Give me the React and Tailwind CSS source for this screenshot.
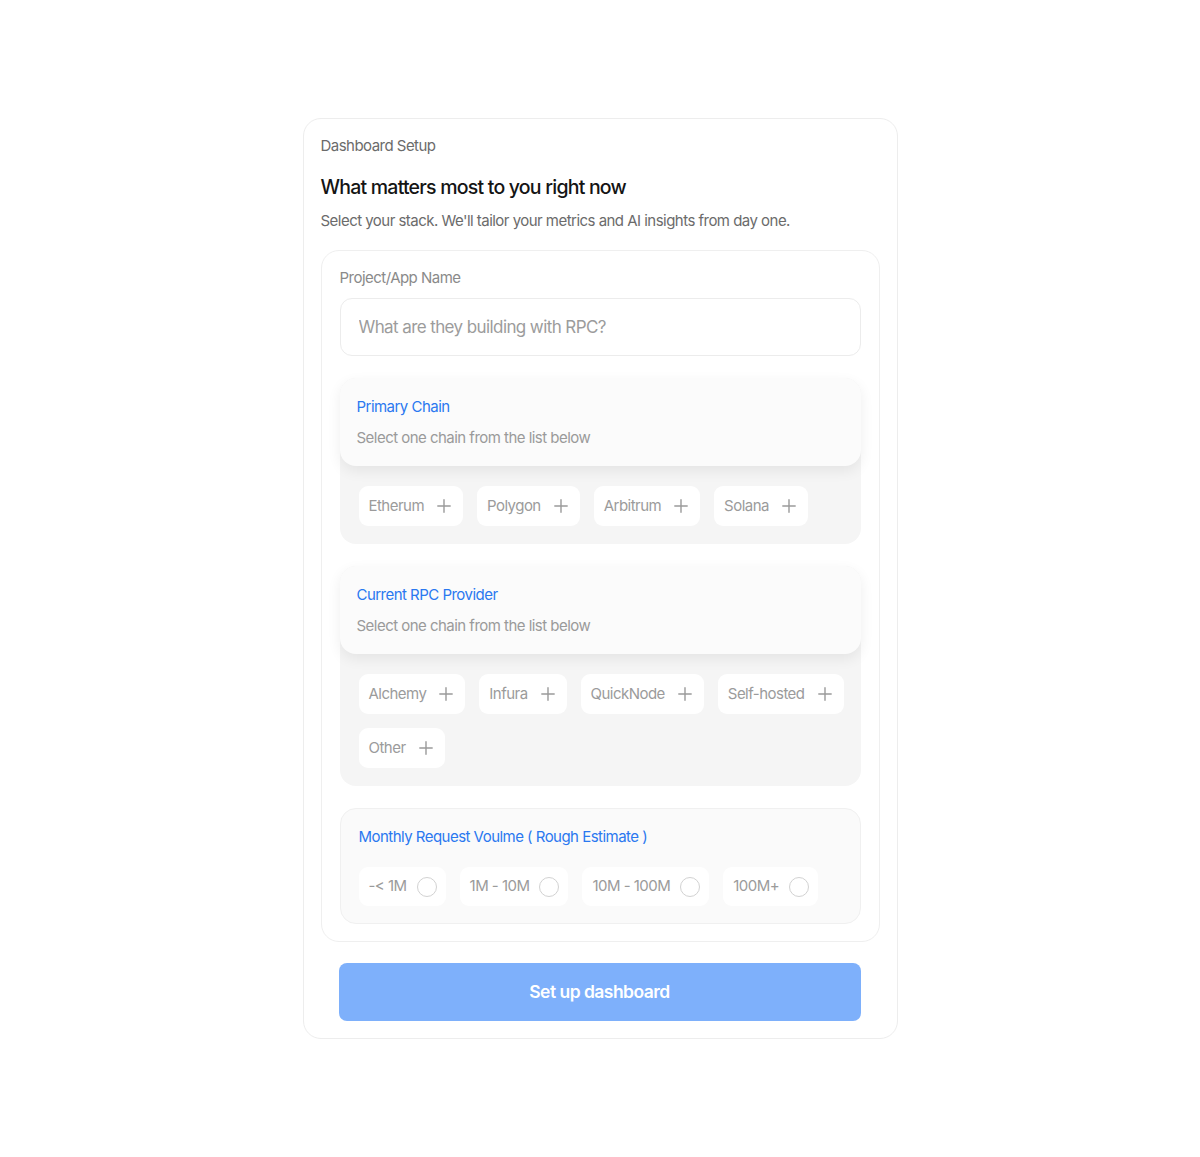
import React from 'react';

const chains = ['Etherum', 'Polygon', 'Arbitrum', 'Solana'];
const providers = ['Alchemy', 'Infura', 'QuickNode', 'Self-hosted', 'Other'];
const volumes = ['-< 1M', '1M - 10M', '10M - 100M', '100M+'];

const PlusIcon = () => (
    <svg width="14" height="14" viewBox="0 0 14 14" fill="none" stroke="#9a9a9a" strokeWidth="1.4" strokeLinecap="round">
        <path d="M7 0.8v12.4M0.8 7h12.4" />
    </svg>
);

const Chip = ({ label }) => (
    <button className="flex h-[40px] items-center gap-[13px] rounded-[9px] bg-white pl-[10px] pr-[12px] text-[15px] text-[#9b9b9b]">
        <span>{label}</span>
        <PlusIcon />
    </button>
);

const ChipPanel = ({ title, subtitle, items }) => (
    <div className="rounded-[16px] bg-[#f5f5f5] pb-[18px]">
        <div className="rounded-[16px] bg-[#fbfbfb] px-[17px] pt-[19px] pb-[18px] shadow-[0_5px_14px_rgba(0,0,0,0.07)]">
            <div className="text-[15px] leading-[20px] text-[#2a78f0]">{title}</div>
            <div className="mt-[11px] text-[15px] leading-[20px] text-[#9a9a9a]">{subtitle}</div>
        </div>
        <div className="mt-[20px] flex flex-wrap gap-x-[14px] gap-y-[14px] pl-[19px] pr-[12px]">
            {items.map((item) => (
                <Chip key={item} label={item} />
            ))}
        </div>
    </div>
);

export default function App() {
    return (
        <div className="min-h-[1157px] bg-white pt-[118px]" style={{ fontFamily: 'Inter, "Noto Sans", sans-serif' }}>
            <div className="mx-auto w-[595px] rounded-[18px] border border-[#ededed] px-[17px] pt-[17px] pb-[17px] tracking-[-0.033em]">
                <div className="text-[15px] leading-[20px] text-[#6b6b6b]">Dashboard Setup</div>
                <h1 className="mt-[18px] text-[19.5px] font-medium leading-[26px] tracking-[-0.04em] text-[#141414]">What matters most to you right now</h1>
                <p className="mt-[11px] text-[15px] leading-[20px] text-[#6b6b6b]">
                    Select your stack. We'll tailor your metrics and AI insights from day one.
                </p>

                <div className="mt-[19px] rounded-[18px] border border-[#efefef] px-[18px] pt-[17px] pb-[17px]">
                    <div className="text-[15px] leading-[20px] text-[#8a8a8a]">Project/App Name</div>
                    <input
                        className="mt-[10px] h-[58px] w-full rounded-[12px] border border-[#ececec] px-[18px] text-[17px] tracking-[-0.035em] text-[#333] outline-none placeholder:text-[#9c9c9c]"
                        placeholder="What are they building with RPC?"
                    />

                    <div className="mt-[22px] flex flex-col gap-[22px]">
                        <ChipPanel title="Primary Chain" subtitle="Select one chain from the list below" items={chains} />
                        <ChipPanel title="Current RPC Provider" subtitle="Select one chain from the list below" items={providers} />

                        <div className="rounded-[16px] border border-[#f0f0f0] bg-[#fafafa] px-[18px] pt-[18px] pb-[17px]">
                            <div className="text-[15px] leading-[20px] text-[#2a78f0]">Monthly Request Voulme ( Rough Estimate )</div>
                            <div className="mt-[20px] flex gap-[14px]">
                                {volumes.map((v) => (
                                    <label key={v} className="flex h-[39px] items-center gap-[10px] rounded-[9px] bg-white pl-[10px] pr-[9px] text-[15px] text-[#9b9b9b]">
                                        <span>{v}</span>
                                        <span className="h-[20px] w-[20px] rounded-full border-[1.5px] border-[#d2d2d2]" />
                                    </label>
                                ))}
                            </div>
                        </div>
                    </div>
                </div>

                <button className="mx-[18px] mt-[21px] h-[58px] w-[522px] rounded-[8px] bg-[#7eb0fb] text-[17.5px] font-semibold text-white">
                    Set up dashboard
                </button>
            </div>
        </div>
    );
}
